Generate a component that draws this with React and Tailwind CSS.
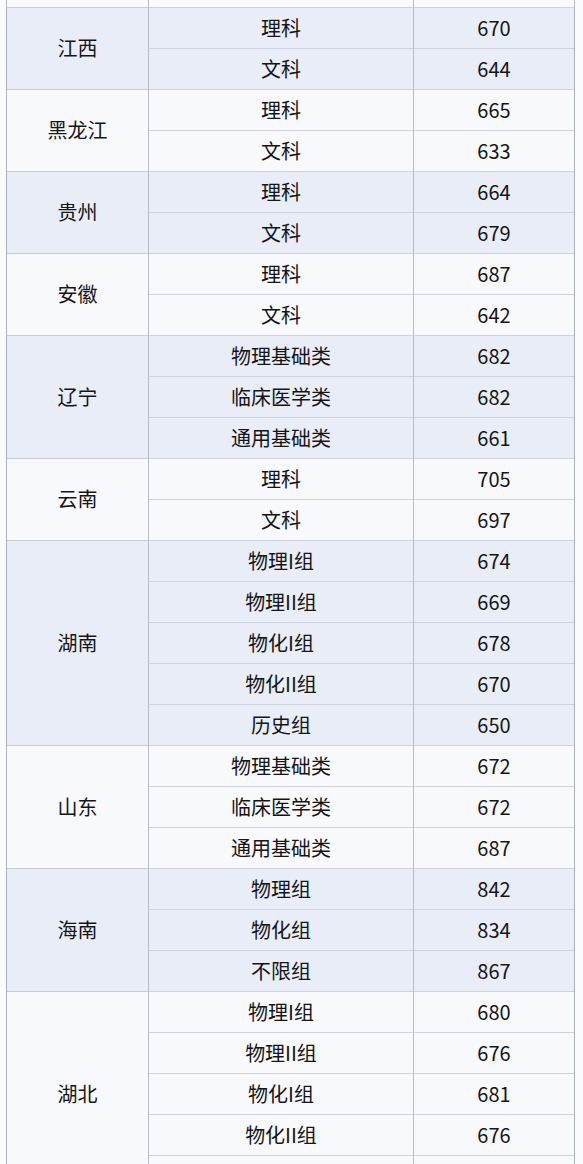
import React from 'react'

// last 湖北 row sits below the visible area; only its cells show
const groups = [
  { name: '江西', rows: [['理科', 670], ['文科', 644]] },
  { name: '黑龙江', rows: [['理科', 665], ['文科', 633]] },
  { name: '贵州', rows: [['理科', 664], ['文科', 679]] },
  { name: '安徽', rows: [['理科', 687], ['文科', 642]] },
  { name: '辽宁', rows: [['物理基础类', 682], ['临床医学类', 682], ['通用基础类', 661]] },
  { name: '云南', rows: [['理科', 705], ['文科', 697]] },
  { name: '湖南', rows: [['物理I组', 674], ['物理II组', 669], ['物化I组', 678], ['物化II组', 670], ['历史组', 650]] },
  { name: '山东', rows: [['物理基础类', 672], ['临床医学类', 672], ['通用基础类', 687]] },
  { name: '海南', rows: [['物理组', 842], ['物化组', 834], ['不限组', 867]] },
  { name: '湖北', rows: [['物理I组', 680], ['物理II组', 676], ['物化I组', 681], ['物化II组', 676], ['', '']] }
]

export default function App() {
  return (
    <div className="w-[583px] h-[1164px] overflow-hidden bg-[#fafbfd] pl-[6px] text-[#151515] font-['Noto_Sans_CJK_SC',sans-serif]">
      <table className="w-[568px] table-fixed border-collapse text-[20px] leading-none">
        <colgroup>
          <col className="w-[142px]" />
          <col className="w-[265px]" />
          <col className="w-[161px]" />
        </colgroup>
        <tbody>
          <tr className="h-[7px] bg-[#f9fafd]">
            <td className="border-l border-r border-[#b6bcc6]" />
            <td className="border-r border-[#b6bcc6]" />
            <td className="border-r border-[#b6bcc6]" />
          </tr>
          {groups.map((g, gi) => {
            const bg = gi % 2 === 0 ? 'bg-[#e8edf8]' : 'bg-[#f8f9fd]'
            return g.rows.map(([subject, score], ri) => (
              <tr key={g.name + ri} className={`h-[41px] ${bg}`}>
                {ri === 0 && (
                  <td
                    rowSpan={g.rows.length}
                    className="border-l border-r border-t border-l-[#aab1bb] border-r-[#b6bcc6] border-t-[#c6ccd6] text-center align-middle"
                  >
                    {g.name}
                  </td>
                )}
                <td className="border-t border-r border-t-[#cdd3dd] border-r-[#b6bcc6] text-center align-middle">
                  {subject}
                </td>
                <td className="border-t border-r border-t-[#cdd3dd] border-r-[#aab1bb] text-center align-middle">
                  {score}
                </td>
              </tr>
            ))
          })}
        </tbody>
      </table>
    </div>
  )
}
